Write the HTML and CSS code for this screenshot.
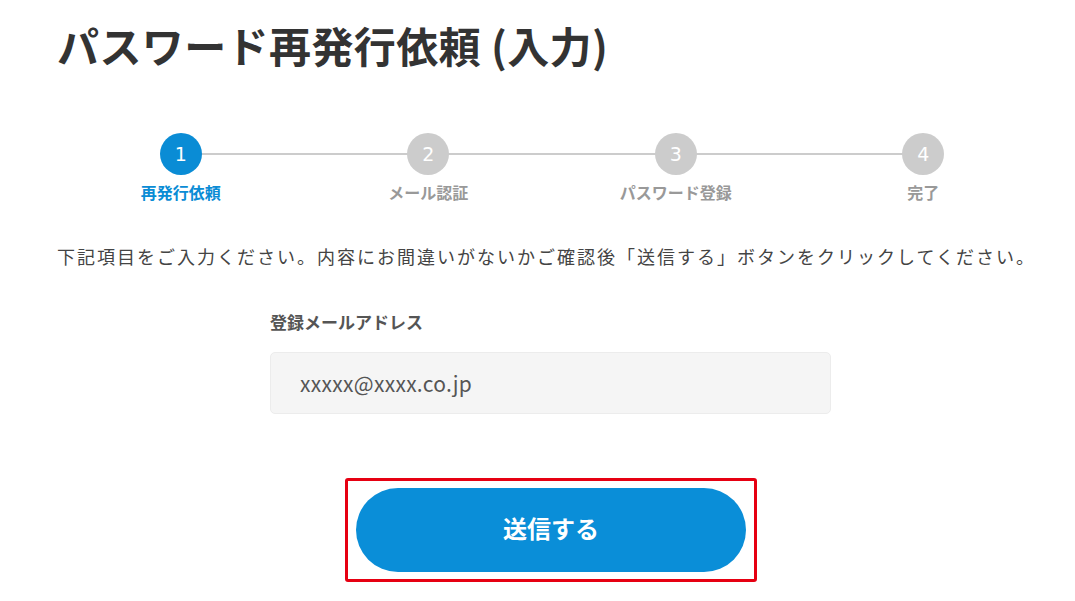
FILE: index.html
```html
<!DOCTYPE html>
<html lang="ja">
<head>
<meta charset="utf-8">
<link rel="stylesheet" href="styles.css">
</head>
<body>
<div class="page">
<h1 class="page-title">パスワード再発行依頼 (入力)</h1>

<ol class="steps">
<li class="step active">
<span class="step-num">1</span>
<span class="step-label">再発行依頼</span>
</li>
<li class="step">
<span class="step-num">2</span>
<span class="step-label">メール認証</span>
</li>
<li class="step">
<span class="step-num">3</span>
<span class="step-label">パスワード登録</span>
</li>
<li class="step">
<span class="step-num">4</span>
<span class="step-label">完了</span>
</li>
</ol>

<p class="lead">下記項目をご入力ください。内容にお間違いがないかご確認後「送信する」ボタンをクリックしてください。</p>

<div class="form">
<label class="field-label" for="mail">登録メールアドレス</label>
<div class="field-input" id="mail">xxxxx@xxxx.co.jp</div>
</div>

<div class="submit-area">
<div class="submit-frame">
<button class="submit-btn" type="button">送信する</button>
</div>
</div>
</div>
</body>
</html>
```
FILE: styles.css
```css
body {
margin: 0;
background: #fff;
color: #333;
font-family: "Noto Sans CJK JP", "Liberation Sans", sans-serif;
}

.page {
width: 990px;
margin-left: 57px;
padding-top: 15px;
}

.page-title {
margin: 0;
font-size: 42px;
font-weight: bold;
letter-spacing: 0.4px;
line-height: 60px;
color: #333;
}

/* ステップ表示 */
.steps {
list-style: none;
margin: 58px 0 0;
padding: 0;
display: grid;
grid-template-columns: repeat(4, 1fr);
}

.step {
position: relative;
display: flex;
flex-direction: column;
align-items: center;
}

.step:not(:last-child)::after {
content: "";
position: absolute;
top: 20px;
left: 50%;
width: 100%;
height: 2px;
background: #ccc;
z-index: 0;
}

.step-num {
position: relative;
z-index: 1;
width: 42px;
height: 42px;
border-radius: 50%;
background: #ccc;
color: #fff;
font-family: "DejaVu Sans", sans-serif;
font-size: 19px;
line-height: 42px;
text-align: center;
}

.step-label {
margin-top: 5px;
font-size: 16px;
font-weight: bold;
color: #999;
line-height: 24px;
}

.step.active .step-num {
background: #0a8cd5;
}

.step.active .step-label {
color: #0a8cd5;
}

.lead {
margin: 38px 0 0;
font-size: 18px;
letter-spacing: 2px;
line-height: 28px;
color: #444;
white-space: nowrap;
}

.form {
width: 561px;
margin: 39px 0 0 213px;
}

.field-label {
display: block;
font-size: 17px;
font-weight: bold;
color: #555;
line-height: 26px;
}

.field-input {
margin-top: 17px;
height: 60px;
border: 1px solid #ececec;
border-radius: 5px;
background: #f5f5f5;
padding-left: 29px;
font-size: 21px;
letter-spacing: 0.3px;
line-height: 60px;
color: #555;
}

.submit-area {
display: flex;
margin: 64px 0 0 288px;
}

.submit-frame {
border: 3px solid #e60012;
border-radius: 3px;
padding: 7px 8px;
}

.submit-btn {
display: block;
width: 390px;
height: 84px;
border: none;
border-radius: 42px;
padding: 0 0 5px;
background: #0a8ed8;
color: #fff;
font-family: "Noto Sans CJK JP", sans-serif;
font-size: 24px;
font-weight: bold;
cursor: pointer;
}
```
